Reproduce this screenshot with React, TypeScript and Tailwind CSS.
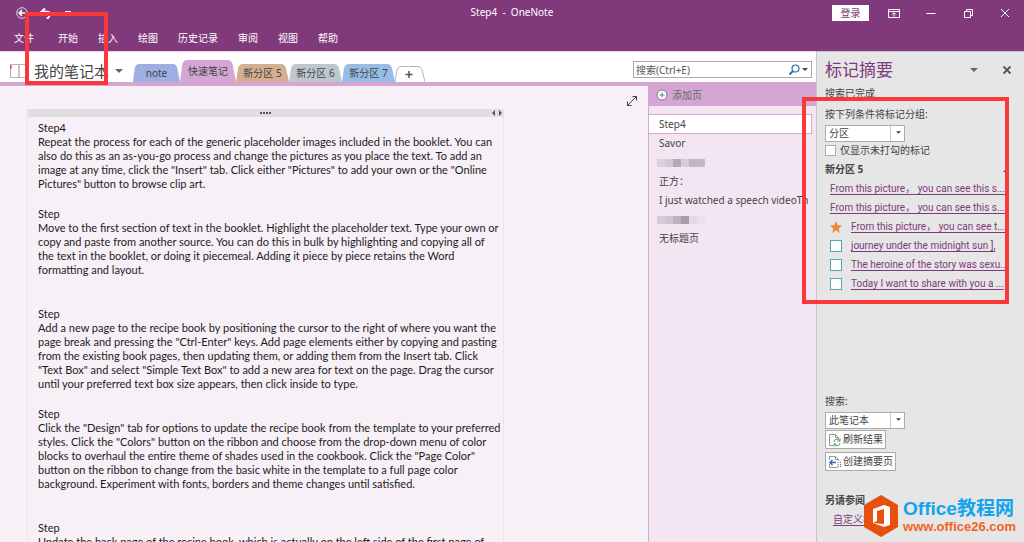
import React from "react";
import clsx from "clsx";

const menuItems = ["开始", "插入", "绘图", "历史记录", "审阅", "视图", "帮助"];

const sections = [
  { name: "note", fill: "#9daee0" },
  { name: "快速笔记", fill: "#d5a6d3", active: true },
  { name: "新分区 5", fill: "#d5ae92" },
  { name: "新分区 6", fill: "#bfc7ce" },
  { name: "新分区 7", fill: "#97bde6" },
];

const notes = [
  {
    title: "Step4",
    space: "mb-4",
    lines: [
      "Repeat the process for each of the generic placeholder images included in the booklet. You can",
      "also do this as an as-you-go process and change the pictures as you place the text. To add an",
      'image at any time, click the "Insert" tab. Click either "Pictures" to add your own or the "Online',
      'Pictures" button to browse clip art.',
    ],
  },
  {
    title: "Step",
    space: "mb-[30px]",
    lines: [
      "Move to the first section of text in the booklet. Highlight the placeholder text. Type your own or",
      "copy and paste from another source. You can do this in bulk by highlighting and copying all of",
      "the text in the booklet, or doing it piecemeal. Adding it piece by piece retains the Word",
      "formatting and layout.",
    ],
  },
  {
    title: "Step",
    space: "mb-4",
    lines: [
      "Add a new page to the recipe book by positioning the cursor to the right of where you want the",
      'page break and pressing the "Ctrl-Enter" keys. Add page elements either by copying and pasting',
      "from the existing book pages, then updating them, or adding them from the Insert tab. Click",
      '"Text Box" and select "Simple Text Box" to add a new area for text on the page. Drag the cursor',
      "until your preferred text box size appears, then click inside to type.",
    ],
  },
  {
    title: "Step",
    space: "mb-[30px]",
    lines: [
      'Click the "Design" tab for options to update the recipe book from the template to your preferred',
      'styles. Click the "Colors" button on the ribbon and choose from the drop-down menu of color',
      'blocks to overhaul the entire theme of shades used in the cookbook. Click the "Page Color"',
      "button on the ribbon to change from the basic white in the template to a full page color",
      "background. Experiment with fonts, borders and theme changes until satisfied.",
    ],
  },
  {
    title: "Step",
    space: "mb-4",
    lines: [
      "Update the back page of the recipe book, which is actually on the left side of the first page of",
    ],
  },
];

const tags = [
  { text: "From this picture， you can see this s..." },
  { text: "From this picture， you can see this s..." },
  { text: "From this picture， you can see t...", icon: "star" },
  { text: "journey under the midnight sun ],", icon: "todo" },
  { text: "The heroine of the story was sexu...", icon: "todo" },
  { text: "Today I want to share with you a ...", icon: "todo" },
];

const mosaics = [
  ["#dccfdb", "#d3c7d2", "#b5a9b6", "#d6cbd6", "#bfb5c0", "#c3bac4"],
  ["#d6cbd7", "#cfc5d0", "#bdb2be", "#a99dab", "#e6d9e6", "#ecdfeb"],
];

const Caret: React.FC<{ className?: string }> = ({ className }) => (
  <svg viewBox="0 0 8 4" className={className} fill="currentColor">
    <path d="M0 0h8L4 4z" />
  </svg>
);

const TitleBar = () => (
  <div className="grid h-[25px] grid-cols-[1fr_auto_1fr] items-center">
    <div className="flex items-center gap-3 pl-4">
      <button aria-label="后退">
        <svg viewBox="0 0 12 12" className="size-3" fill="none" stroke="#fff">
          <circle cx="6" cy="6" r="5.3" strokeWidth="0.8" />
          <path d="M9.5 6H3.5M6 3.2 3.2 6 6 8.8" strokeWidth="1.7" />
        </svg>
      </button>
      <button aria-label="撤消">
        <svg viewBox="0 0 12 12" className="size-3" fill="none" stroke="#fff">
          <path d="M5 1.500 1.500 4.800 5 8M2 4.800h5c3 0 4 2.500 1.500 5.500L7 12" strokeWidth="2" />
        </svg>
      </button>
      <button aria-label="自定义快速访问工具栏">
        <svg viewBox="0 0 8 8" className="size-2" stroke="#fff">
          <path d="M1 2.500h6" />
        </svg>
      </button>
    </div>
    <h1 className="text-[10px] whitespace-pre">Step4  -  OneNote</h1>
    <div className="flex items-center justify-end gap-[25px] pr-[13px]">
      <button className="-mr-1.5 h-4 w-[37px] bg-white text-[10px] leading-4 text-[#80397b]">
        登录
      </button>
      <button aria-label="功能区显示选项">
        <svg viewBox="0 0 12 12" className="size-3" fill="none" stroke="#fff">
          <path d="M.5 2.500h11v8H.5zM.5 4.500h11M6 9.500V6M4 7.500l2-2 2 2" />
        </svg>
      </button>
      <button aria-label="最小化">
        <svg viewBox="0 0 12 12" className="size-3" stroke="#fff">
          <path d="M1.500 6.500h9" />
        </svg>
      </button>
      <button aria-label="还原">
        <svg viewBox="0 0 12 12" className="size-3" fill="none" stroke="#fff">
          <path d="M2.500 4.500h6v6h-6zM4.500 4V2.500h6v6H9" />
        </svg>
      </button>
      <button aria-label="关闭">
        <svg viewBox="0 0 12 12" className="size-3" stroke="#fff">
          <path d="m2 2 8 8M10 2l-8 8" />
        </svg>
      </button>
    </div>
  </div>
);

const SectionTabs = () => (
  <div className="flex h-[31px] items-end border-t border-[#ecd5ec] bg-white pl-2.5">
    <button className="flex h-full items-center gap-1.5 pt-2 text-[#444]">
      <svg viewBox="0 0 18 16" className="h-4 w-[18px]" fill="#fff" stroke="#b5b5b5">
        <path d="M.5 1.500h8.500v13H.5zM9 1.500h8.500v13H9z" />
        <path d="M.5 2v4" stroke="#d9472b" strokeWidth="2" />
        <path d="M17.500 5v2M17.500 9v2" stroke="#8a70b0" />
      </svg>
      <span className="text-[15px] leading-5">我的笔记本</span>
      <Caret className="h-1 w-2 text-[#666]" />
    </button>
    <nav className="ml-2.5 flex items-end">
      {sections.map((section) => (
        <button
          key={section.name}
          className={clsx(
            "relative text-[10px] text-[#444]",
            section.name === "note" && "w-[47px]",
            section.active && "w-14",
            section.name !== "note" && !section.active && "w-[53px]",
            section.active ? "h-[22px]" : "h-[18px]",
          )}
        >
          <svg
            viewBox="0 0 54 20"
            preserveAspectRatio="none"
            className="absolute inset-0 h-full w-full"
            fill={section.fill}
          >
            <path d="M0 20 2 5Q3 0 7 0H46Q50 0 51 5L54 20z" />
          </svg>
          <span className="relative">{section.name}</span>
        </button>
      ))}
      <button aria-label="新建分区">
        <svg viewBox="0 0 30 16" className="h-4 w-[30px]" fill="#fff" stroke="#b5b5b5">
          <path d="M0 16 2 4Q3 .5 6 .5H23Q26 .5 27 4L30 16" />
          <path d="M14 5v7M10.500 8.500h7" stroke="#555" strokeWidth="1.500" />
        </svg>
      </button>
    </nav>
    <label className="mr-1 mb-1 ml-auto flex h-[17px] w-[179px] items-center border border-[#ababab] bg-white pr-[3px]">
      <input
        aria-label="搜索"
        placeholder="搜索(Ctrl+E)"
        className="min-w-0 flex-1 pl-0.5 text-[10px] leading-[14px] outline-none placeholder:text-[#555]"
      />
      <svg viewBox="0 0 12 12" className="size-3" fill="none" stroke="#2b6cb0">
        <circle cx="7.500" cy="4.500" r="3.500" strokeWidth="1.200" />
        <path d="M5 7 1.500 10.500" strokeWidth="2" />
      </svg>
      <Caret className="ml-0.5 h-[3px] w-1.5 text-[#444]" />
    </label>
  </div>
);

const NoteCanvas = () => (
  <main className="relative min-w-0 flex-1 overflow-hidden bg-[#f7f0f7] pt-[23px] pl-[27px]">
    <button aria-label="全页视图" className="absolute top-[9px] right-2.5">
      <svg viewBox="0 0 12 12" className="size-3" fill="none" stroke="#444">
        <path d="M1.500 10.500l9-9M6.500 1.500h4v4M1.500 6.500v4h4" />
      </svg>
    </button>
    <article className="w-[477px] border-x border-[#ebe3eb] font-[Lato,'Noto_Sans_CJK_SC',sans-serif] text-[11px] leading-[14px] text-[#1c1c1c]">
      <div className="mb-1 grid h-2 grid-cols-[1fr_auto_1fr] items-center bg-[#dfdfdf]">
        <svg viewBox="0 0 12 2" className="col-start-2 h-0.5 w-3" fill="#555">
          <path d="M0 0h2v2H0zM3 0h2v2H3zM6 0h2v2H6zM9 0h2v2H9z" />
        </svg>
        <svg viewBox="0 0 10 6" className="mr-px h-1.5 w-2.5 justify-self-end" fill="#555">
          <path d="M3 0v6L0 3zM7 0v6l3-3z" />
        </svg>
      </div>
      {notes.map((note, index) => (
        <section key={index} className={clsx("pl-2.5 whitespace-nowrap", note.space)}>
          <h2>{note.title}</h2>
          {note.lines.map((line) => (
            <p key={line}>{line}</p>
          ))}
        </section>
      ))}
    </article>
  </main>
);

const Mosaic: React.FC<{ colors: string[] }> = ({ colors }) => (
  <li className="flex h-[19px] items-center pl-2">
    {colors.map((color, i) => (
      <span key={i} className="h-2 w-2" style={{ backgroundColor: color }} />
    ))}
  </li>
);

const PageList = () => (
  <nav className="-mt-1 flex w-[168px] shrink-0 flex-col bg-[#f3e6f2] text-[10px] text-[#444]">
    <button className="flex h-6 shrink-0 items-center gap-1 bg-[#d5a6d3] pt-0.5 pl-2 text-[#666]">
      <svg viewBox="0 0 12 12" className="size-3" stroke="#777">
        <circle cx="6" cy="6" r="5" fill="#fff" />
        <path d="M6 3.500v5M3.500 6h5" />
      </svg>
      添加页
    </button>
    <ul className="flex-1 overflow-hidden border-l border-[#d5a6d3] pt-2 leading-[19px] whitespace-nowrap">
      <li className="mr-1 -ml-px border border-l-0 border-[#d5a6d3] bg-white pl-[11px] leading-[18px]">
        <a href="#step4">Step4</a>
      </li>
      <li className="pl-2.5">
        <a href="#savor">Savor</a>
      </li>
      <Mosaic colors={mosaics[0]} />
      <li className="pl-2.5">
        <a href="#zhengfang">正方：</a>
      </li>
      <li className="pl-2.5">
        <a href="#speech">I just watched a speech videoTh</a>
      </li>
      <Mosaic colors={mosaics[1]} />
      <li className="pl-2.5">
        <a href="#untitled">无标题页</a>
      </li>
    </ul>
  </nav>
);

const Picker: React.FC<{ id: string; value: string }> = ({ id, value }) => (
  <div className="relative h-[17px] w-20">
    <select
      id={id}
      className="h-full w-full appearance-none border border-[#ababab] bg-white pl-[3px] text-[10px] leading-[15px]"
    >
      <option>{value}</option>
    </select>
    <span className="pointer-events-none absolute inset-y-0 right-0 flex w-[15px] items-center justify-center border-l border-[#c6c6c6]">
      <Caret className="h-[3px] w-[5px]" />
    </span>
  </div>
);

const Watermark = () => (
  <div className="pointer-events-none absolute right-2 bottom-1 flex items-center gap-1 font-['Liberation_Sans','Noto_Sans_CJK_SC',sans-serif]">
    <svg viewBox="0 0 36 44" className="h-11 w-9">
      <path d="M18 1 35 11v22L18 43 1 33V11z" fill="#e8500f" />
      <path d="M10 15 21 11l6 2v18l-6 2-11-4 11 1V15l-7 2v10l-4 2z" fill="#fff" />
    </svg>
    <div className="whitespace-nowrap">
      <p className="text-[19px] leading-[22px] font-bold text-[#12a5ec]">Office教程网</p>
      <p className="text-[13px] leading-[14px] font-bold text-[#f0651d]">www.office26.com</p>
    </div>
  </div>
);

const TagSummary = () => (
  <aside className="relative flex w-[208px] shrink-0 flex-col items-start border-t border-l border-[#c6c6c6] bg-[#e6e6e6] pl-2 text-[10px] leading-[19px] text-[#444]">
    <div className="flex w-full items-center pt-1.5 pr-3">
      <h2 className="flex-1 text-[17px] leading-6 text-[#80397b]">标记摘要</h2>
      <button aria-label="任务窗格选项">
        <Caret className="mr-6 h-1 w-2 text-[#666]" />
      </button>
      <button aria-label="关闭窗格">
        <svg viewBox="0 0 10 10" className="size-2.5" stroke="#555" strokeWidth="1.800">
          <path d="m1.500 1.500 7 7M8.500 1.500l-7 7" />
        </svg>
      </button>
    </div>
    <p className="mt-0.5">搜索已完成</p>
    <label htmlFor="group" className="mt-0.5">
      按下列条件将标记分组:
    </label>
    <Picker id="group" value="分区" />
    <label className="flex items-center gap-1">
      <input type="checkbox" className="size-[11px] appearance-none border border-[#ababab] bg-white" />
      仅显示未打勾的标记
    </label>
    <div className="flex w-full items-center justify-between pr-4">
      <h3 className="font-bold">新分区 5</h3>
      <svg viewBox="0 0 5 5" className="size-[5px]" fill="#444">
        <path d="M5 0v5H0z" />
      </svg>
    </div>
    <ul className="w-full pr-4 pl-[5px] font-[Roboto,'Noto_Sans_CJK_SC',sans-serif]">
      {tags.map((tag, i) => (
        <li key={i} className="flex h-[19px] items-center gap-[9px] whitespace-nowrap">
          {tag.icon === "star" && (
            <svg viewBox="0 0 12 12" className="size-3 shrink-0" fill="#ed8733">
              <path d="m6 0 1.700 4.300 4.300.3-3.300 2.800L9.800 12 6 9.300 2.200 12l1.100-4.600L0 4.600l4.300-.3z" />
            </svg>
          )}
          {tag.icon === "todo" && (
            <input
              type="checkbox"
              aria-label={tag.text}
              className="size-3 shrink-0 appearance-none border border-[#5b9fb5] bg-white"
            />
          )}
          <a href="#tag" className="text-[#80397b] underline underline-offset-2">
            {tag.text}
          </a>
        </li>
      ))}
    </ul>
    <label htmlFor="scope" className="mt-auto">
      搜索:
    </label>
    <Picker id="scope" value="此笔记本" />
    <button className="mt-0.5 flex h-[19px] items-center gap-px border border-[#ababab] bg-[#fdfdfd] px-0.5">
      <svg viewBox="0 0 14 14" className="size-3.5" fill="none" stroke="#999">
        <path d="M5 12.500H1.500V1.500h6l3 3V6M7.500 1.500v3h3" />
        <path d="M6 9a3 3 0 0 1 5.500-1.500M12 5.500v2.500H9.500M12 10a3 3 0 0 1-5.500 1.500M6 13.500V11h2.500" stroke="#3c9a6b" />
      </svg>
      刷新结果
    </button>
    <button className="mt-[3px] flex h-[19px] items-center gap-px border border-[#ababab] bg-[#fdfdfd] px-0.5">
      <svg viewBox="0 0 14 14" className="size-3.5" fill="none" stroke="#999">
        <path d="M1.500 5V1.500h6l3 3V6M1.500 9v3.500h8M7.500 1.500v3h3" />
        <path d="M8 7.500H2M4.500 5 2 7.500 4.500 10" stroke="#2b6cb0" strokeWidth="1.500" />
        <path d="M10 7v6M12.500 7v6" stroke="#2b6cb0" strokeDasharray="1 1" />
      </svg>
      创建摘要页
    </button>
    <h3 className="mt-5 font-bold">另请参阅</h3>
    <a href="#custom" className="mb-[13px] ml-2 text-[#80397b] underline underline-offset-2">
      自定义标记
    </a>
    <Watermark />
    {/* highlight around the tag results */}
    <div className="pointer-events-none absolute top-[45px] right-[15px] -left-[15px] h-[207px] border-4 border-[#fa383a]" />
  </aside>
);

export default function App() {
  return (
    <div className="relative flex h-screen flex-col overflow-hidden font-['Noto_Sans','Noto_Sans_CJK_SC',sans-serif]">
      <header className="shrink-0 bg-[#80397b] text-white">
        <TitleBar />
        <nav className="flex h-[26px] items-center gap-5 pl-3.5 text-[10px]">
          <button className="mr-1">文件</button>
          {menuItems.map((item) => (
            <button key={item}>{item}</button>
          ))}
        </nav>
      </header>
      <div className="flex min-h-0 flex-1">
        <div className="flex min-w-0 flex-1 flex-col">
          <SectionTabs />
          <div className="flex min-h-0 flex-1 border-t-4 border-[#d5a6d3]">
            <NoteCanvas />
            <PageList />
          </div>
        </div>
        <TagSummary />
      </div>
      {/* highlight around the home tab and notebook name */}
      <div className="pointer-events-none absolute top-3 left-[25px] h-[73px] w-[83px] border-4 border-[#fa383a]" />
    </div>
  );
}
